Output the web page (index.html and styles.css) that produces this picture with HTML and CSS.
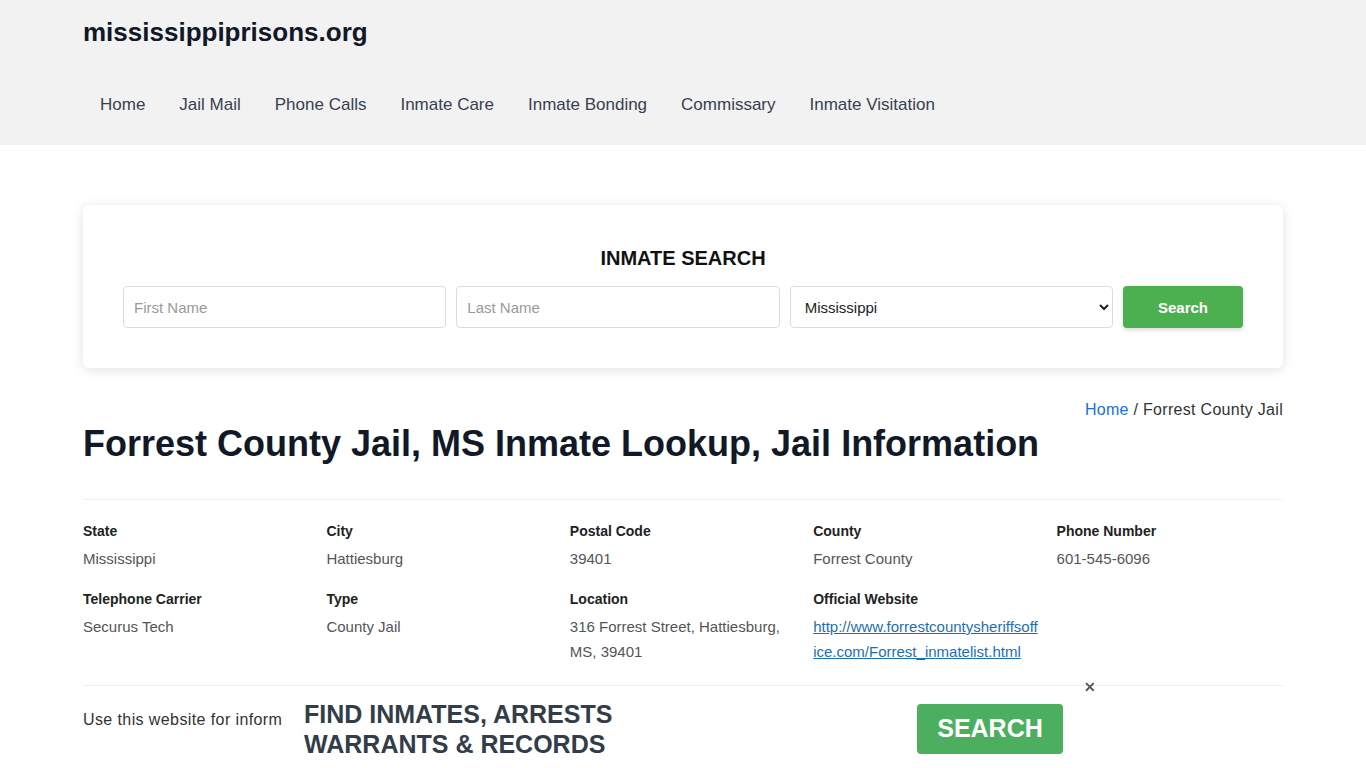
FILE: index.html
```html
<!DOCTYPE html>
<html lang="en">
<head>
<meta charset="utf-8">
<title>Forrest County Jail, MS Inmate Lookup, Jail Information</title>
<link rel="stylesheet" href="styles.css">
</head>
<body>
<header class="site-header">
  <div class="container">
    <div class="brand">mississippiprisons.org</div>
    <nav class="nav">
      <a href="#">Home</a>
      <a href="#">Jail Mail</a>
      <a href="#">Phone Calls</a>
      <a href="#">Inmate Care</a>
      <a href="#">Inmate Bonding</a>
      <a href="#">Commissary</a>
      <a href="#">Inmate Visitation</a>
    </nav>
  </div>
</header>

<main class="container">
  <section class="search-card">
    <h2 class="search-title">INMATE SEARCH</h2>
    <form class="search-form">
      <input class="field" type="text" placeholder="First Name">
      <input class="field" type="text" placeholder="Last Name">
      <select class="field select">
        <option>Mississippi</option>
      </select>
      <button class="btn-search" type="button">Search</button>
    </form>
  </section>

  <div class="breadcrumb"><a href="#">Home</a> / Forrest County Jail</div>
  <h1 class="page-title">Forrest County Jail, MS Inmate Lookup, Jail Information</h1>

  <section class="info-grid">
    <div class="item"><div class="label">State</div><div class="value">Mississippi</div></div>
    <div class="item"><div class="label">City</div><div class="value">Hattiesburg</div></div>
    <div class="item"><div class="label">Postal Code</div><div class="value">39401</div></div>
    <div class="item"><div class="label">County</div><div class="value">Forrest County</div></div>
    <div class="item"><div class="label">Phone Number</div><div class="value">601-545-6096</div></div>
    <div class="item"><div class="label">Telephone Carrier</div><div class="value">Securus Tech</div></div>
    <div class="item"><div class="label">Type</div><div class="value">County Jail</div></div>
    <div class="item"><div class="label">Location</div><div class="value">316 Forrest Street, Hattiesburg, MS, 39401</div></div>
    <div class="item"><div class="label">Official Website</div><div class="value"><a class="ext" href="#">http://www.forrestcountysheriffsoffice.com/Forrest_inmatelist.html</a></div></div>
  </section>

  <p class="intro">Use this website for inform</p>
</main>

<div class="promo">
  <div class="promo-text">FIND INMATES, ARRESTS<br>WARRANTS &amp; RECORDS</div>
  <button class="promo-btn" type="button">SEARCH</button>
  <span class="promo-close">&#x2715;</span>
</div>
</body>
</html>
```

FILE: styles.css
```css
* { box-sizing: border-box; }
html, body { margin: 0; padding: 0; }
body {
  font-family: "Liberation Sans", Arial, sans-serif;
  color: #333;
  background: #fff;
  height: 768px;
  overflow: hidden;
}
.container {
  width: 1200px;
  margin: 0 auto;
}
.site-header {
  background: #f2f2f2;
  padding: 15px 0 15px;
}
.brand {
  font-size: 26px;
  font-weight: 700;
  line-height: 34px;
  color: #111827;
}
.nav {
  display: flex;
  margin-top: 31px;
}
.nav a {
  display: block;
  padding: 0 17px;
  line-height: 50px;
  font-size: 17px;
  color: #374151;
  text-decoration: none;
}
.search-card {
  margin-top: 60px;
  background: #fff;
  border-radius: 6px;
  box-shadow: 0 2px 12px rgba(0,0,0,0.12);
  padding: 40px 40px 40px;
}
.search-title {
  margin: 0 0 15px;
  text-align: center;
  font-size: 20px;
  line-height: 26px;
  font-weight: 700;
  color: #111;
}
.search-form {
  display: flex;
  gap: 10px;
}
.field {
  flex: 1;
  height: 42px;
  border: 1px solid #dcdcdc;
  border-radius: 4px;
  padding: 0 10px;
  font-family: "Liberation Sans", Arial, sans-serif;
  font-size: 15px;
  color: #222;
  background: #fff;
  min-width: 0;
}
.field::placeholder { color: #9a9a9a; }
.btn-search {
  width: 120px;
  flex: none;
  height: 42px;
  border: 0;
  border-radius: 4px;
  background: #4caf50;
  color: #fff;
  font-family: "Liberation Sans", Arial, sans-serif;
  font-size: 15px;
  font-weight: 700;
  box-shadow: 0 2px 4px rgba(0,0,0,0.15);
}
.breadcrumb {
  margin-top: 30px;
  text-align: right;
  font-size: 16px;
  line-height: 24px;
  color: #333;
  letter-spacing: 0.3px;
}
.breadcrumb a { color: #1c6ed6; text-decoration: none; }
.page-title {
  margin: 0;
  font-size: 36px;
  line-height: 44px;
  font-weight: 700;
  color: #111827;
}
.info-grid {
  margin-top: 33px;
  border-top: 1px solid #eee;
  border-bottom: 1px solid #eee;
  padding: 21px 0 21px;
  display: grid;
  grid-template-columns: repeat(5, 1fr);
  row-gap: 18px;
  column-gap: 17px;
}
.label {
  font-size: 14px;
  line-height: 20px;
  font-weight: 700;
  color: #222;
  margin-bottom: 5px;
}
.value {
  font-size: 15px;
  line-height: 25px;
  color: #555;
}
.ext {
  color: #1e6fb0;
  text-decoration: underline;
  word-break: break-all;
}
.intro {
  margin: 22px 0 0;
  font-size: 16px;
  line-height: 24px;
  color: #333;
  white-space: nowrap;
  letter-spacing: 0.4px;
}
.promo {
  position: fixed;
  left: 290px;
  bottom: 0;
  width: 800px;
  height: 75px;
  background: #fff;
  display: flex;
  align-items: center;
  padding: 0 27px 4px 14px;
}
.promo-text {
  font-size: 25px;
  line-height: 30px;
  font-weight: 700;
  color: #333d4a;
}
.promo-btn {
  margin-left: auto;
  width: 146px;
  height: 50px;
  border: 0;
  border-radius: 4px;
  background: #4caf5f;
  color: #fff;
  font-family: "Liberation Sans", Arial, sans-serif;
  font-size: 25px;
  font-weight: 700;
}
.promo-close {
  position: absolute;
  top: -14px;
  right: -6px;
  font-size: 14px;
  font-weight: 700;
  color: #555;
}
```
